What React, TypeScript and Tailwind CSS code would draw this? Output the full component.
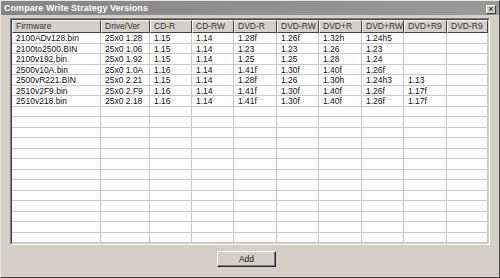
import React from "react";

const columns = [
  { label: "Firmware", w: "w-[89px]" },
  { label: "Drive/Ver", w: "w-[49px]" },
  { label: "CD-R", w: "w-[42px]" },
  { label: "CD-RW", w: "w-[42px]" },
  { label: "DVD-R", w: "w-[43px]" },
  { label: "DVD-RW", w: "w-[42px]" },
  { label: "DVD+R", w: "w-[43px]" },
  { label: "DVD+RW", w: "w-[42px]" },
  { label: "DVD+R9", w: "w-[43px]" },
  { label: "DVD-R9", w: "w-[41px]" },
];

const rows: string[][] = [
  ["2100ADv128.bin", "25x0 1.28", "1.15", "1.14", "1.28f", "1.26f", "1.32h", "1.24h5", "", ""],
  ["2100to2500.BIN", "25x0 1.06", "1.15", "1.14", "1.23", "1.23", "1.26", "1.23", "", ""],
  ["2100v192.bin", "25x0 1.92", "1.15", "1.14", "1.25", "1.25", "1.28", "1.24", "", ""],
  ["2500v10A.bin", "25x0 1.0A", "1.16", "1.14", "1.41f", "1.30f", "1.40f", "1.26f", "", ""],
  ["2500vR221.BIN", "25x0 2.21", "1.15", "1.14", "1.28f", "1.26", "1.30h", "1.24h3", "1.13", ""],
  ["2510v2F9.bin", "25x0 2.F9", "1.16", "1.14", "1.41f", "1.30f", "1.40f", "1.26f", "1.17f", ""],
  ["2510v218.bin", "25x0 2.18", "1.16", "1.14", "1.41f", "1.30f", "1.40f", "1.26f", "1.17f", ""],
];

// pad out with empty rows so the list fills its box
const allRows = [...rows, ...Array.from({ length: 13 }, () => columns.map(() => ""))];

const App: React.FC = () => {
  return (
    <div className="w-[500px] h-[278px] bg-[#d4d0c8] border border-t-[#e8e6e0] border-l-[#e8e6e0] border-r-[#404040] border-b-[#404040] flex flex-col font-['Liberation_Sans',Arial,sans-serif] text-[#111]">
      {/* Title bar */}
      <div className="h-[14px] bg-gradient-to-r from-[#858585] to-[#9a9a9a] flex items-center justify-between pl-[3px] pr-[3px]">
        <span className="text-[9px] font-bold text-white leading-none tracking-[0.05px]">
          Compare Write Strategy Versions
        </span>
        <button className="w-[10px] h-[9px] mt-[3px] bg-[#d4d0c8] border border-t-white border-l-white border-r-[#404040] border-b-[#404040] flex items-center justify-center text-[9px] leading-none text-black">
          ×
        </button>
      </div>

      {/* List view */}
      <div className="mt-[3px] ml-[9px] w-[480px] border border-t-[#808080] border-l-[#808080] border-r-white border-b-white">
        <div className="border border-t-[#404040] border-l-[#404040] border-r-[#d4d0c8] border-b-[#d4d0c8] bg-white">
          <div className="flex h-[13px]">
            {columns.map((c) => (
              <div
                key={c.label}
                className={`${c.w} shrink-0 bg-[#d4d0c8] border border-t-white border-l-white border-r-[#404040] border-b-[#404040] pl-[3px] text-[8.5px] leading-[11px] text-[#333]`}
              >
                {c.label}
              </div>
            ))}
          </div>
          {allRows.map((r, i) => (
            <div key={i} className="flex h-[10.5px]">
              {r.map((v, j) => (
                <div
                  key={j}
                  className={`${columns[j].w} shrink-0 border-r border-b border-[#c8c8c8] pl-[4px] text-[8.5px] leading-[10px] whitespace-nowrap overflow-hidden`}
                >
                  {v}
                </div>
              ))}
            </div>
          ))}
        </div>
      </div>

      {/* Footer */}
      <div className="flex justify-center pr-[7px] mt-[6px]">
        <button className="w-[59px] h-[16px] bg-[#d4d0c8] border border-t-white border-l-white border-r-[#202020] border-b-[#202020] shadow-[inset_-1px_-1px_0_#808080] text-[8.5px] leading-none text-[#111]">
          Add
        </button>
      </div>
    </div>
  );
};

export default App;
